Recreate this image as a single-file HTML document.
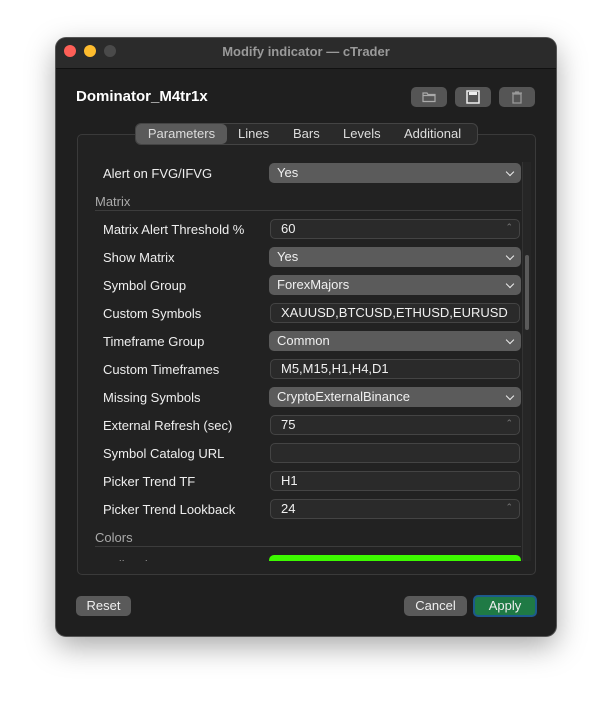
<!DOCTYPE html>
<html><head><style>
*{box-sizing:border-box;margin:0;padding:0}
body{width:612px;height:710px;background:#fff;font-family:"Liberation Sans",sans-serif;position:relative;overflow:hidden}
.win{position:absolute;left:56px;top:38px;width:500px;height:598px;background:#1f1f1f;border-radius:10px;box-shadow:0 0 0 1px #555,0 10px 30px rgba(0,0,0,.35);overflow:hidden}
.tb{position:absolute;left:0;top:0;width:100%;height:31px;background:#2b2b2b;border-bottom:1px solid #111;color:#9a9a9a;font-weight:bold;font-size:13px;text-align:center;line-height:27px}
.dot{position:absolute;top:7px;width:12px;height:12px;border-radius:50%}
.a{position:absolute}
.lbl{position:absolute;left:47px;color:#eee;font-size:13px}
.dd{position:absolute;left:213px;width:252px;height:20px;background:#5b5b5b;border-radius:5px;color:#f0f0f0;font-size:13px;line-height:19px;padding-left:8px}
.dd:after{content:"";position:absolute;right:8px;top:6px;width:5px;height:5px;border-right:1.5px solid #eee;border-bottom:1.5px solid #eee;transform:rotate(45deg)}
.in{position:absolute;left:214px;width:250px;height:20px;background:#2a2a2a;border:1px solid #444;border-radius:5px;color:#f0f0f0;font-size:13px;line-height:18px;padding-left:10px}
.sp:after{content:"⌃";position:absolute;right:6px;top:-2px;color:#777;font-size:9px}
.hd{position:absolute;left:39px;color:#aaa;font-size:13px}
.hl{position:absolute;left:39px;width:426px;height:1px;background:#3c3c3c}
.btn{position:absolute;height:20px;background:#5a5a5a;border-radius:5px;color:#eee;font-size:13px;line-height:20px;text-align:center}
.ib{position:absolute;top:49px;width:36px;height:20px;background:#555;border-radius:5px}
</style></head><body>
<div class="win">
<div class="tb">Modify indicator — cTrader
<div class="dot" style="left:8px;background:#fe5f57"></div>
<div class="dot" style="left:28px;background:#febc2e"></div>
<div class="dot" style="left:48px;background:#4a4a4a"></div>
</div>
<div class="a" style="left:20px;top:50px;color:#fff;font-weight:bold;font-size:15px">Dominator_M4tr1x</div>
<div class="ib" style="left:355px"><svg width="36" height="20"><path d="M12 6h4l1 1.5h7v7H12z M12 8.5h12" fill="none" stroke="#aaa" stroke-width="1.2"/></svg></div>
<div class="ib" style="left:399px"><svg width="36" height="20"><rect x="12" y="4" width="12" height="12" fill="none" stroke="#eee" stroke-width="1.5"/><rect x="14" y="5" width="8" height="3" fill="#eee"/></svg></div>
<div class="ib" style="left:443px"><svg width="36" height="20"><path d="M14 7h8v9h-8z M13 6h10 M16 5h4" fill="none" stroke="#999" stroke-width="1.3"/></svg></div>
<div class="a" style="left:21px;top:96px;width:459px;height:441px;border:1px solid #3a3a3a;border-radius:5px;background:#222"></div>
<div class="a" style="left:79px;top:85px;width:343px;height:22px;background:#2a2a2a;border:1px solid #444;border-radius:6px;font-size:13px;color:#ddd;line-height:20px">
<span class="a" style="left:0;top:0;width:91px;height:20px;background:#5a5a5a;border-radius:5px;text-align:center">Parameters</span>
<span class="a" style="left:102px">Lines</span><span class="a" style="left:157px">Bars</span><span class="a" style="left:207px">Levels</span><span class="a" style="left:268px">Additional</span></div>
<div class="a" style="left:466px;top:124px;width:9px;height:399px;background:#262626;border-left:1px solid #333"></div>
<div class="a" style="left:469px;top:217px;width:4px;height:75px;background:#5a5a5a;border-radius:2px"></div>
<div class="a" style="left:0;top:124px;width:465px;height:399px;overflow:hidden">
<div class="lbl" style="top:4px">Alert on FVG/IFVG</div><div class="dd" style="top:1px">Yes</div>
<div class="hd" style="top:32px">Matrix</div><div class="hl" style="top:48px"></div>
<div class="lbl" style="top:60px">Matrix Alert Threshold %</div><div class="in sp" style="top:57px">60</div>
<div class="lbl" style="top:88px">Show Matrix</div><div class="dd" style="top:85px">Yes</div>
<div class="lbl" style="top:116px">Symbol Group</div><div class="dd" style="top:113px">ForexMajors</div>
<div class="lbl" style="top:144px">Custom Symbols</div><div class="in" style="top:141px">XAUUSD,BTCUSD,ETHUSD,EURUSD</div>
<div class="lbl" style="top:172px">Timeframe Group</div><div class="dd" style="top:169px">Common</div>
<div class="lbl" style="top:200px">Custom Timeframes</div><div class="in" style="top:197px">M5,M15,H1,H4,D1</div>
<div class="lbl" style="top:228px">Missing Symbols</div><div class="dd" style="top:225px">CryptoExternalBinance</div>
<div class="lbl" style="top:256px">External Refresh (sec)</div><div class="in sp" style="top:253px">75</div>
<div class="lbl" style="top:284px">Symbol Catalog URL</div><div class="in" style="top:281px"></div>
<div class="lbl" style="top:312px">Picker Trend TF</div><div class="in" style="top:309px">H1</div>
<div class="lbl" style="top:340px">Picker Trend Lookback</div><div class="in sp" style="top:337px">24</div>
<div class="hd" style="top:368px">Colors</div><div class="hl" style="top:384px"></div>
<div class="lbl" style="top:396px">Bull Color</div><div class="a" style="left:213px;top:393px;width:252px;height:20px;background:#3dfa00;border-radius:5px"></div>
</div>
<div class="btn" style="left:20px;top:558px;width:55px">Reset</div>
<div class="btn" style="left:348px;top:558px;width:63px">Cancel</div>
<div class="btn" style="left:417px;top:557px;width:64px;height:22px;background:#1f7a45;border:2px solid #1d5a8c;line-height:18px">Apply</div>
</div>
</body></html>
